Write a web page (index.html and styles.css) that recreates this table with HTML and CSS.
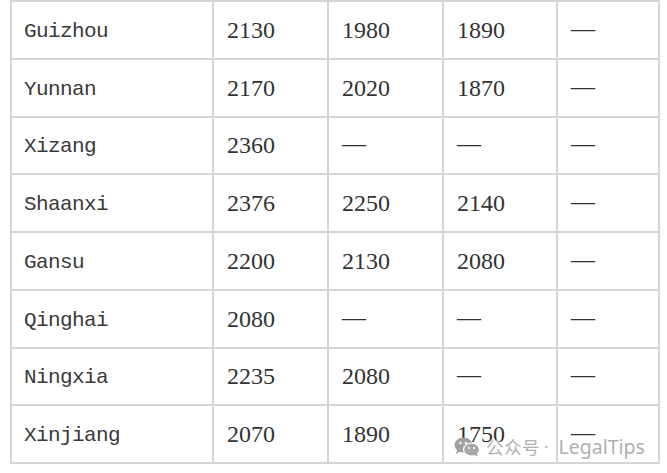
FILE: index.html
```html
<!DOCTYPE html>
<html>
<head>
<meta charset="utf-8">
<link rel="stylesheet" href="styles.css">
</head>
<body>
<div class="page">
  <table class="grid">
    <colgroup>
      <col class="c1"><col class="c2"><col class="c3"><col class="c4"><col class="c5">
    </colgroup>
    <tbody>
      <tr><td class="name">Guizhou</td><td>2130</td><td>1980</td><td>1890</td><td><span class="dash">—</span></td></tr>
      <tr><td class="name">Yunnan</td><td>2170</td><td>2020</td><td>1870</td><td><span class="dash">—</span></td></tr>
      <tr><td class="name">Xizang</td><td>2360</td><td><span class="dash">—</span></td><td><span class="dash">—</span></td><td><span class="dash">—</span></td></tr>
      <tr><td class="name">Shaanxi</td><td>2376</td><td>2250</td><td>2140</td><td><span class="dash">—</span></td></tr>
      <tr><td class="name">Gansu</td><td>2200</td><td>2130</td><td>2080</td><td><span class="dash">—</span></td></tr>
      <tr><td class="name">Qinghai</td><td>2080</td><td><span class="dash">—</span></td><td><span class="dash">—</span></td><td><span class="dash">—</span></td></tr>
      <tr><td class="name">Ningxia</td><td>2235</td><td>2080</td><td><span class="dash">—</span></td><td><span class="dash">—</span></td></tr>
      <tr><td class="name">Xinjiang</td><td>2070</td><td>1890</td><td>1750</td><td><span class="dash">—</span></td></tr>
    </tbody>
  </table>
  <div class="watermark">
    <svg class="wx" width="26" height="20" viewBox="0 0 26 20">
      <ellipse cx="9.5" cy="8" rx="9" ry="7.5" fill="#a0a0a0"/>
      <path d="M3 13 L2 17 L6.5 14.5 Z" fill="#a0a0a0"/>
      <ellipse cx="17.5" cy="12.5" rx="8" ry="6.5" fill="#a8a8a8" stroke="#fff" stroke-width="1.2"/>
      <path d="M22.5 16.5 L24 19.5 L19.5 18 Z" fill="#a8a8a8"/>
      <circle cx="6.5" cy="6" r="1.2" fill="#fff"/>
      <circle cx="12" cy="6" r="1.2" fill="#fff"/>
      <circle cx="15" cy="11" r="1" fill="#fff"/>
      <circle cx="20" cy="11" r="1" fill="#fff"/>
    </svg>
    <span class="wm-cjk">公众号</span>
    <span class="wm-dot">·</span>
    <span class="wm-latin">LegalTips</span>
  </div>
</div>
</body>
</html>
```

FILE: styles.css
```css
html, body {
  margin: 0;
  padding: 0;
  background: #ffffff;
}

.page {
  position: relative;
  width: 667px;
  height: 473px;
  padding: 0 0 0 10px;
  box-sizing: border-box;
  overflow: hidden;
}

.grid {
  border-collapse: collapse;
  table-layout: fixed;
  width: 650px;
  color: #333333;
  font-family: "Liberation Serif", "Times New Roman", serif;
  font-size: 24px;
}

.c1 { width: 202px; }
.c2 { width: 115px; }
.c3 { width: 115px; }
.c4 { width: 114px; }
.c5 { width: 102px; }

.grid td {
  border: 2px solid #d6d6d6;
  height: 55.75px;
  padding: 0 0 0 13px;
  vertical-align: middle;
  white-space: nowrap;
  line-height: 1;
}

.grid td.name {
  font-family: "Liberation Mono", "DejaVu Sans Mono", monospace;
  font-size: 21px;
  letter-spacing: -0.6px;
  height: 52.75px;
  padding: 3px 0 0 12px;
  color: #3a3a3a;
}

.dash {
  vertical-align: 4px;
}

.watermark {
  position: absolute;
  left: 454px;
  top: 437px;
  display: flex;
  align-items: center;
  color: #b0b0b0;
  font-family: "Noto Sans", "Noto Sans CJK SC", sans-serif;
  line-height: 20px;
  text-shadow: 0 0 2px #ffffff, 0 0 2px #ffffff;
}

.wx {
  display: block;
  margin-right: 6px;
}

.wm-cjk {
  font-family: "Noto Sans CJK SC", sans-serif;
  font-size: 17.5px;
  letter-spacing: 0.5px;
}

.wm-dot {
  font-size: 17px;
  margin: 0 10px 0 4px;
}

.wm-latin {
  font-size: 19.5px;
}
```
